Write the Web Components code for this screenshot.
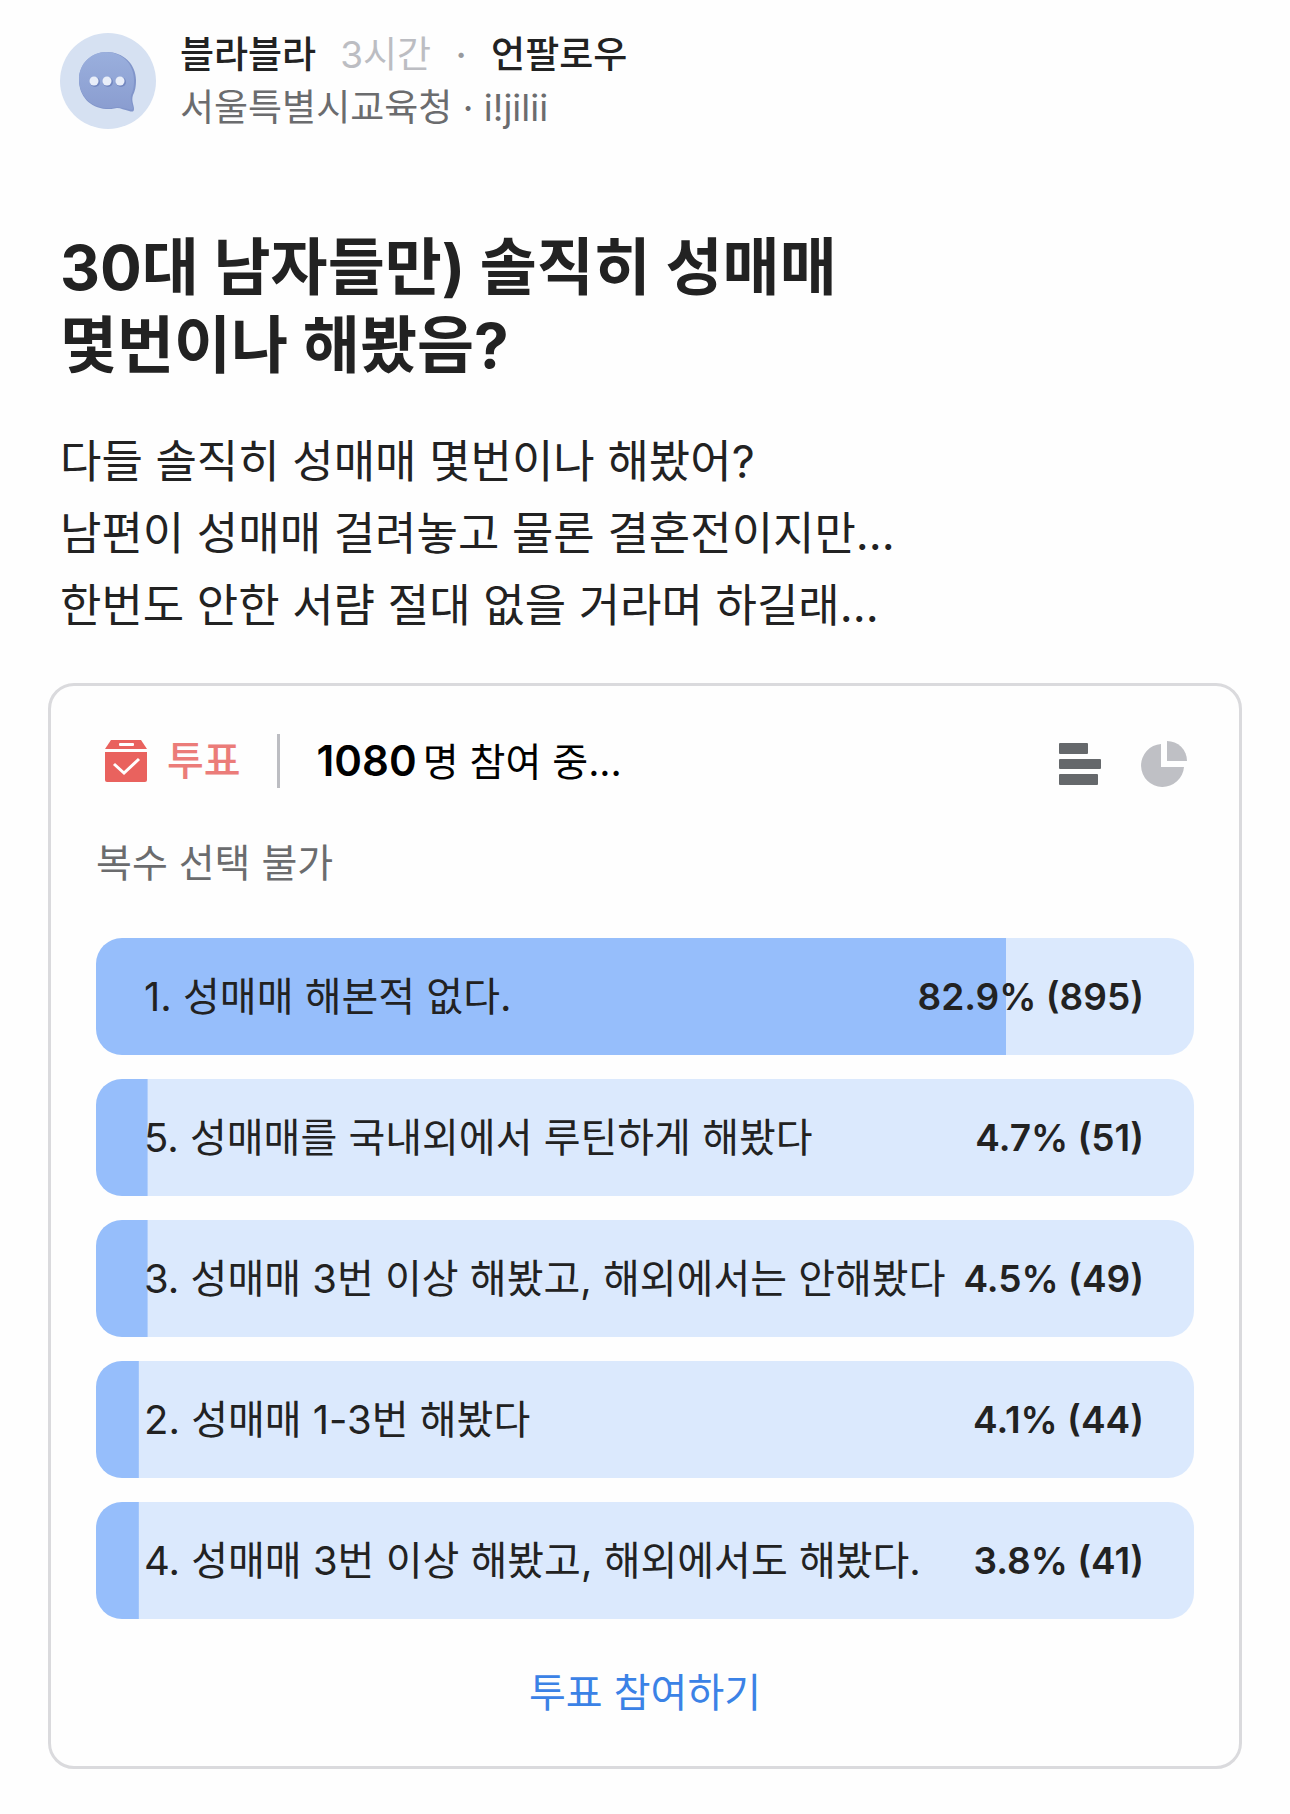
<!DOCTYPE html>
<html lang="ko">
<head>
<meta charset="UTF-8">
<meta name="viewport" content="width=device-width, initial-scale=1.0">
<title>블라블라</title>
<style>
    body {
        margin: 0;
        background: #fefefe;
        color: #222;
        font-family: Inter, "Noto Sans CJK KR", sans-serif;
    }
</style>
</head>
<body>
<post-page>
    <post-author slot="author">
        <span slot="board">블라블라</span>
        <span slot="time">3시간</span>
        <span slot="company">서울특별시교육청 · i!jilii</span>
    </post-author>
    <span slot="title">30대 남자들만) 솔직히 성매매<br>몇번이나 해봤음?</span>
    <span slot="body">다들 솔직히 성매매 몇번이나 해봤어?<br>남편이 성매매 걸려놓고 물론 결혼전이지만...<br>한번도 안한 서럄 절대 없을 거라며 하길래...</span>
    <poll-card slot="poll" count="1080">
        <span slot="note">복수 선택 불가</span>
        <poll-option percent="82.9" votes="895" fill="82.9">1. 성매매 해본적 없다.</poll-option>
        <poll-option percent="4.7" votes="51" fill="4.7">5. 성매매를 국내외에서 루틴하게 해봤다</poll-option>
        <poll-option percent="4.5" votes="49" fill="4.7">3. 성매매 3번 이상 해봤고, 해외에서는 안해봤다</poll-option>
        <poll-option percent="4.1" votes="44" fill="3.9">2. 성매매 1-3번 해봤다</poll-option>
        <poll-option percent="3.8" votes="41" fill="3.9">4. 성매매 3번 이상 해봤고, 해외에서도 해봤다.</poll-option>
    </poll-card>
</post-page>

<script>
class PostPage extends HTMLElement {
    connectedCallback() {
        this.attachShadow({ mode: 'open' });
        this.shadowRoot.innerHTML = `
        <style>
            :host {
                display: block;
                padding: 28px 48px 44px;
            }
            header, h1, p {
                margin: 0;
                padding: 0 12px;
            }
            h1 {
                margin-top: 95px;
                font-size: 62px;
                line-height: 78px;
                font-weight: 700;
            }
            p {
                margin: 41px 0;
                font-size: 45px;
                line-height: 72px;
            }
        </style>
        <article>
            <header><slot name="author"></slot></header>
            <h1><slot name="title"></slot></h1>
            <p><slot name="body"></slot></p>
            <slot name="poll"></slot>
        </article>
        `;
    }
}

class PostAuthor extends HTMLElement {
    connectedCallback() {
        this.attachShadow({ mode: 'open' });
        this.shadowRoot.innerHTML = `
        <style>
            :host {
                display: flex;
                align-items: center;
                gap: 24px;
                font-size: 37px;
                line-height: 53px;
            }
            svg {
                flex: none;
                width: 96px;
                height: 96px;
            }
            .line {
                display: flex;
                font-weight: 500;
            }
            .time {
                margin-left: 24px;
                color: #bcbdc2;
                font-weight: 400;
            }
            .dot {
                width: 60px;
                color: #98999d;
                text-align: center;
            }
            .company {
                color: #6b6c6e;
            }
            button {
                padding: 0;
                border: 0;
                background: none;
                color: inherit;
                font: inherit;
                cursor: pointer;
            }
        </style>
        <svg viewBox="0 0 96 96" aria-hidden="true">
            <defs>
                <linearGradient id="bubble" x1="0" y1="0" x2="0" y2="1">
                    <stop offset="0" stop-color="#9aafdd"/>
                    <stop offset="1" stop-color="#8a9dd0"/>
                </linearGradient>
            </defs>
            <circle cx="48" cy="48" r="48" fill="#d6e1f2"/>
            <path d="M47 19C63 19 76 31 76 47C76 54 75 58 73 62C71 68 74 72 74 76C74 79 72 79 69 78C64 77 61 75 57 75C53 76 50 76 46 76C30 75 19 63 19 47C19 31 31 19 47 19Z" fill="#8195ca"/>
            <path d="M46 19C62 19 74 31 74 47C74 54 73 58 71 62C70 67 72 71 73 75C73 77 71 77 68 76C63 75 60 74 57 74C53 75 50 75 46 75C30 74 19 62 19 46C19 31 31 19 46 19Z" fill="url(#bubble)"/>
            <g fill="#7488c0">
                <circle cx="35" cy="49" r="5"/><circle cx="48" cy="49" r="5"/><circle cx="61" cy="49" r="5"/>
            </g>
            <g fill="#e9eef9">
                <circle cx="34" cy="48" r="4.5"/><circle cx="47" cy="48" r="4.5"/><circle cx="60" cy="48" r="4.5"/>
            </g>
        </svg>
        <div>
            <div class="line">
                <slot name="board"></slot>
                <span class="time"><slot name="time"></slot></span>
                <span class="dot">·</span>
                <button type="button">언팔로우</button>
            </div>
            <div class="company"><slot name="company"></slot></div>
        </div>
        `;
    }
}

class PollCard extends HTMLElement {
    connectedCallback() {
        this.attachShadow({ mode: 'open' });
        this.shadowRoot.innerHTML = `
        <style>
            :host {
                display: flex;
                flex-direction: column;
                gap: 45px;
                padding: 48px 45px 44px;
                border: 3px solid #dadadd;
                border-radius: 26px;
                font-size: 40px;
                line-height: 60px;
            }
            .head {
                display: flex;
                align-items: center;
                height: 54px;
                padding: 0 7px 0 9px;
            }
            svg {
                display: block;
            }
            .label {
                margin-left: 20px;
                padding-right: 36px;
                border-right: 3px solid #bcbdc2;
                line-height: 54px;
                color: #eb7c79;
                font-weight: 500;
            }
            .count {
                display: flex;
                flex: 1;
                align-items: baseline;
                gap: 6px;
                margin-left: 37px;
                color: #000;
                font-size: 39px;
            }
            b {
                font-size: 42px;
                font-weight: 600;
            }
            .views {
                display: flex;
                align-items: center;
                gap: 40px;
                padding-top: 6px;
            }
            button {
                padding: 0;
                border: 0;
                background: none;
                color: inherit;
                font: inherit;
                cursor: pointer;
            }
            .note {
                color: #6b6c6e;
                font-size: 39px;
            }
            .options {
                display: flex;
                flex-direction: column;
                gap: 24px;
            }
            .join {
                align-self: center;
                line-height: 58px;
                color: #3b82e6;
            }
        </style>
        <div class="head">
            <svg width="42" height="42" viewBox="0 0 42 42" aria-hidden="true">
                <path d="M6 0H36L42 9H0Z" fill="#e9625e"/>
                <path d="M0 12H42V40Q42 42 40 42H2Q0 42 0 40Z" fill="#e9625e"/>
                <rect x="14" y="3" width="15" height="3" rx="1" fill="#fff"/>
                <path d="M9 24L19 33L34 19" fill="none" stroke="#fff" stroke-width="3"/>
            </svg>
            <span class="label">투표</span>
            <span class="count"><b></b><span>명 참여 중...</span></span>
            <div class="views">
                <button type="button" aria-label="막대 그래프" aria-pressed="true">
                    <svg width="42" height="42" viewBox="0 0 42 42" fill="#65686b">
                        <rect width="29" height="11" rx="1"/>
                        <rect y="16" width="42" height="10" rx="1"/>
                        <rect y="31" width="39" height="11" rx="1"/>
                    </svg>
                </button>
                <button type="button" aria-label="원 그래프" aria-pressed="false">
                    <svg width="46" height="46" viewBox="0 0 46 46" fill="#bfc0c5">
                        <path d="M20 3V26H43A21.5 21.5 0 1 1 20 3Z"/>
                        <path d="M26 0A20 20 0 0 1 46 20H26Z"/>
                    </svg>
                </button>
            </div>
        </div>
        <div class="note"><slot name="note"></slot></div>
        <div class="options"><slot></slot></div>
        <button type="button" class="join">투표 참여하기</button>
        `;
        this.shadowRoot.querySelector('b').textContent = this.getAttribute('count');
    }
}

class PollOption extends HTMLElement {
    connectedCallback() {
        let percent = this.getAttribute('percent');
        let votes = this.getAttribute('votes');
        let fill = this.getAttribute('fill');

        this.attachShadow({ mode: 'open' });
        this.shadowRoot.innerHTML = `
        <style>
            :host {
                display: flex;
                align-items: center;
                justify-content: space-between;
                min-height: 117px;
                box-sizing: border-box;
                padding: 0 50px 0 48px;
                border-radius: 26px;
                background: linear-gradient(#96befb, #96befb) no-repeat 0 0 / ${fill}% 100% #dbe9fd;
                color: #222;
            }
            .result {
                flex: none;
                font-size: 37px;
                font-weight: 600;
            }
        </style>
        <span><slot></slot></span>
        <span class="result">${percent}% (${votes})</span>
        `;
    }
}

customElements.define('post-page', PostPage);
customElements.define('post-author', PostAuthor);
customElements.define('poll-card', PollCard);
customElements.define('poll-option', PollOption);
</script>
</body>
</html>
